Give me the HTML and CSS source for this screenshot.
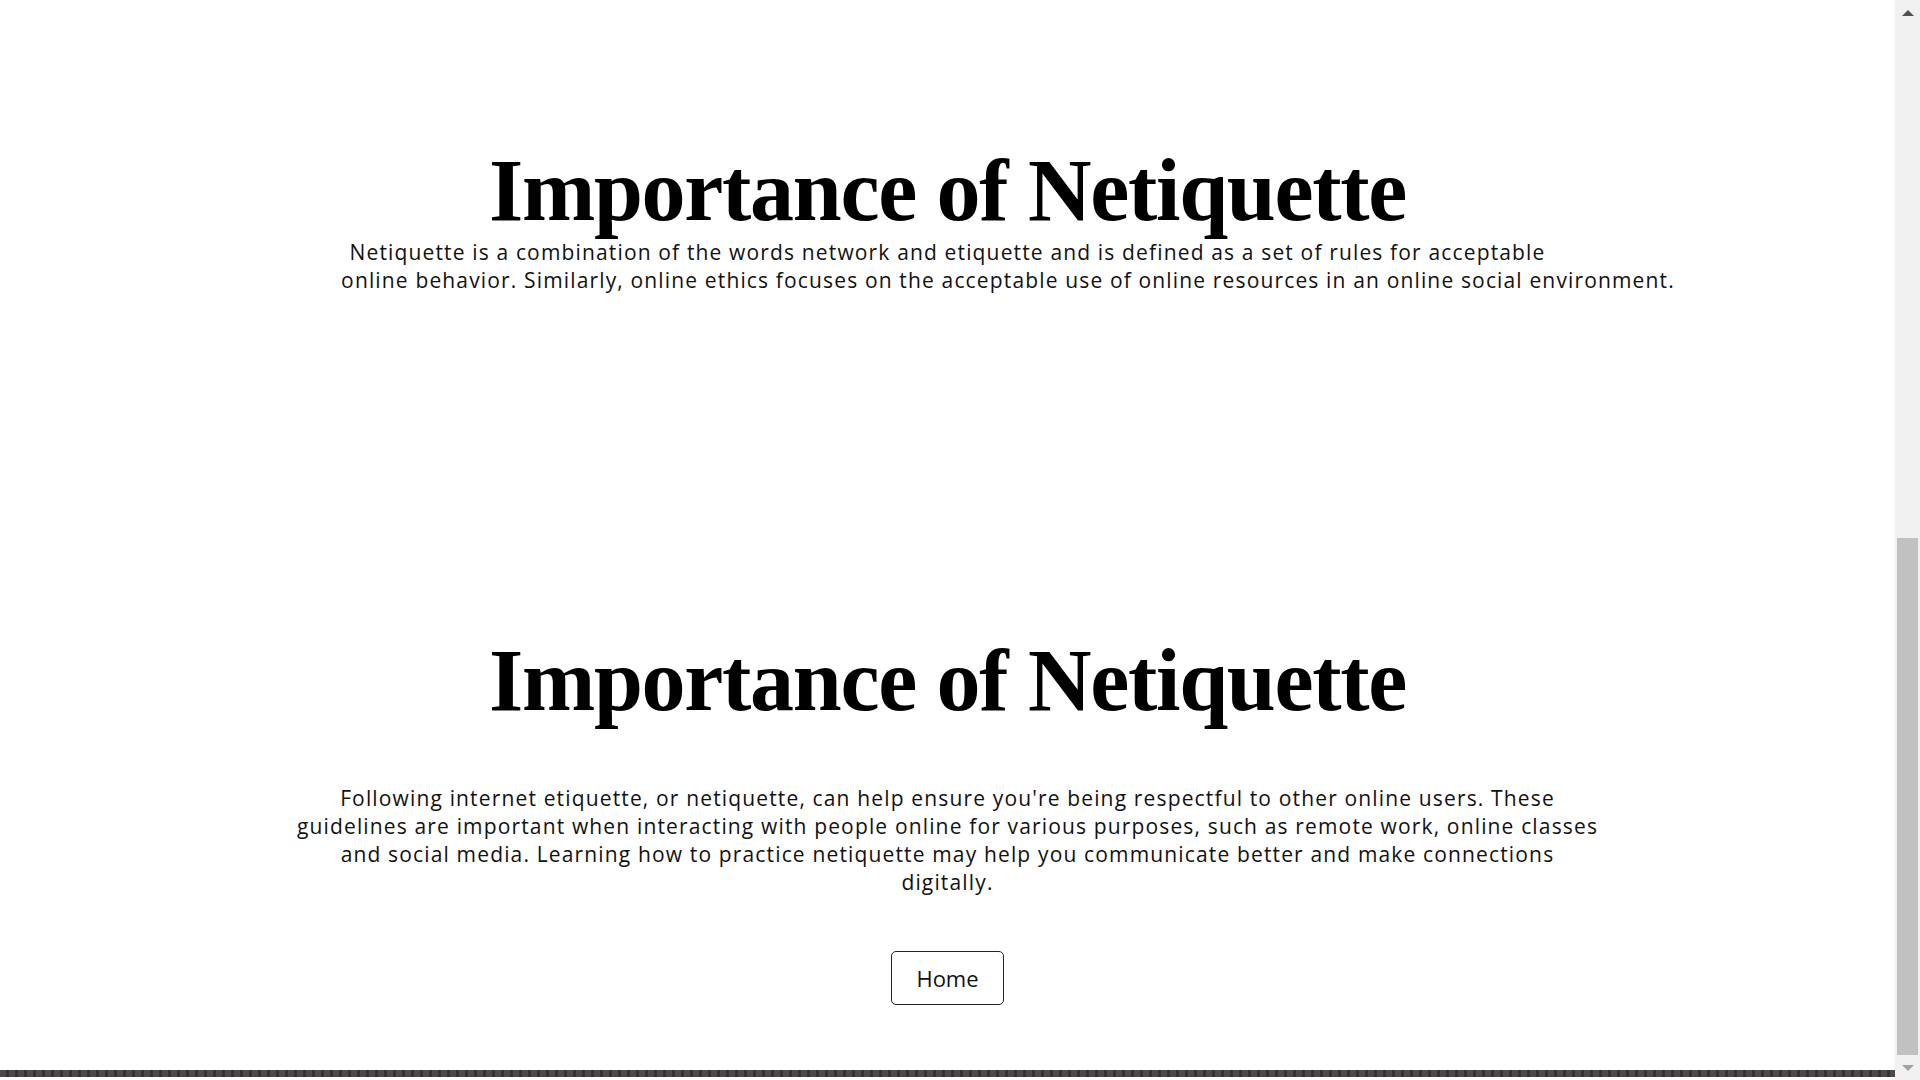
FILE: index.html
```html
<!DOCTYPE html>
<html lang="en">
<head>
<meta charset="utf-8">
<title>Importance of Netiquette</title>
<link rel="stylesheet" href="styles.css">
</head>
<body>
<div class="window">
  <main class="page">
    <section class="intro">
      <h2 class="title">Importance of Netiquette</h2>
      <p class="intro-text">Netiquette is a combination of the words network and etiquette and is defined as a set of rules for acceptable<br>online behavior. Similarly, online ethics focuses on the acceptable use of online resources in an online social environment.</p>
    </section>
    <section class="importance">
      <h2 class="title">Importance of Netiquette</h2>
      <p class="importance-text">Following internet etiquette, or netiquette, can help ensure you're being respectful to other online users. These<br>guidelines are important when interacting with people online for various purposes, such as remote work, online classes<br>and social media. Learning how to practice netiquette may help you communicate better and make connections<br>digitally.</p>
      <a class="btn" href="#">Home</a>
    </section>
    <footer class="footer-bar"></footer>
  </main>
  <div class="scrollbar" aria-hidden="true">
    <div class="sb-btn"><span class="arrow-up"></span></div>
    <div class="sb-track"><div class="sb-thumb"></div></div>
    <div class="sb-btn"><span class="arrow-down"></span></div>
  </div>
</div>
</body>
</html>
```
FILE: styles.css
```css
html, body {
  margin: 0;
  height: 100%;
  overflow: hidden;
  background: #fff;
  color: #111;
  font-family: "Open Sans", "Liberation Sans", sans-serif;
}

.window {
  display: flex;
  height: 100vh;
}

.page {
  flex: 1;
  min-width: 0;
  overflow: hidden;
}

/* scrollbar (page is scrolled to the bottom) */
.scrollbar {
  width: 25px;
  flex: none;
  display: flex;
  flex-direction: column;
  background: #f1f1f1;
}
.sb-btn {
  height: 25px;
  flex: none;
  display: flex;
  align-items: center;
  justify-content: center;
}
.arrow-up {
  width: 0;
  height: 0;
  border-left: 6px solid transparent;
  border-right: 6px solid transparent;
  border-bottom: 6px solid #505050;
  margin-top: 1px;
}
.arrow-down {
  width: 0;
  height: 0;
  border-left: 6px solid transparent;
  border-right: 6px solid transparent;
  border-top: 6px solid #a3a3a3;
  margin-top: 1px;
}
.sb-track {
  flex: 1;
  display: flex;
  flex-direction: column;
  justify-content: flex-end;
}
.sb-thumb {
  height: 517px;
  margin: 0 2px;
  background: #c1c1c1;
}

.title {
  margin: 0;
  font-family: "Liberation Serif", serif;
  font-weight: 700;
  font-size: 88px;
  line-height: 88px;
  letter-spacing: -1.3px;
  text-align: center;
  color: #000;
}

.intro {
  padding-top: 147px;
}
.intro-text {
  width: 64%;
  margin: 3px auto 0;
  text-align: center;
  white-space: nowrap;
  font-size: 21px;
  line-height: 28px;
  letter-spacing: 1.15px;
}

.importance {
  padding-top: 343px;
  display: flex;
  flex-direction: column;
  align-items: center;
}
.importance-text {
  margin: 59px 0 0;
  text-align: center;
  white-space: nowrap;
  font-size: 21px;
  line-height: 28px;
  letter-spacing: 1.15px;
}

.btn {
  margin-top: 55px;
  width: 113px;
  height: 54px;
  box-sizing: border-box;
  border: 1px solid #222;
  border-radius: 5px;
  display: flex;
  align-items: center;
  justify-content: center;
  font-size: 22px;
  color: #111;
  text-decoration: none;
}

.footer-bar {
  margin-top: 65px;
  height: 7px;
  background: repeating-linear-gradient(to right, #4f4848 0 6px, #3b3030 6px 9px);
}
```
